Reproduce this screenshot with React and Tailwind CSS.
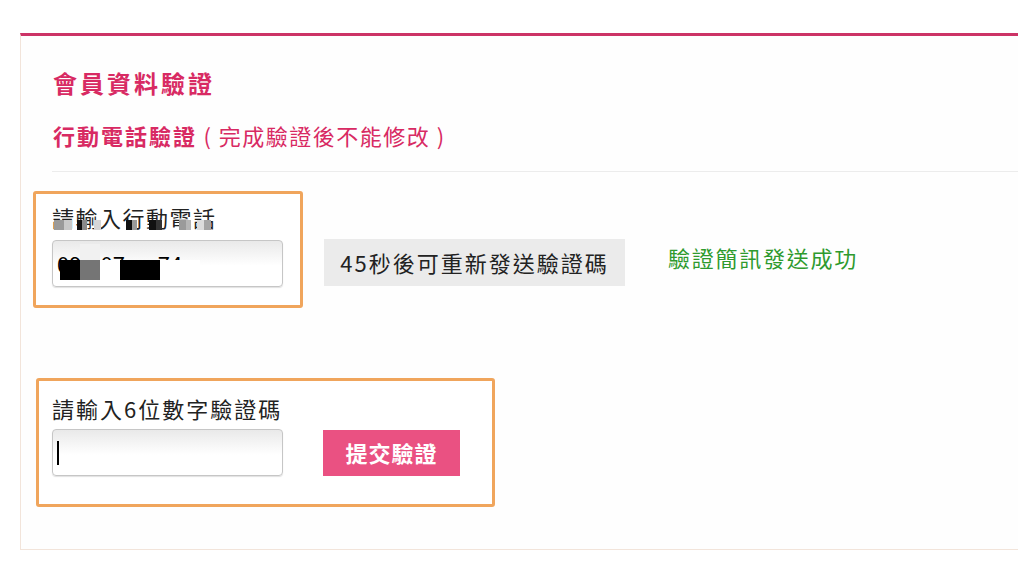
import React from "react";

const FONT = { fontFamily: '"Noto Sans CJK TC", "Noto Sans", sans-serif' };

// mosaic strip under the phone label: [gap-before, width, colour]
const labelBlocks = [
  [2, 10, "#9a9a9a"], [0, 8, "#c9c9c9"], [5, 5, "#111"], [0, 5, "#8a8a8a"],
  [7, 7, "#d6d6d6"], [25, 6, "#111"], [0, 5, "#9a9a9a"], [12, 7, "#111"],
  [0, 6, "#333"], [17, 7, "#9a9a9a"], [0, 5, "#b5b5b5"], [6, 7, "#dcdcdc"],
  [0, 7, "#a5a5a5"],
];

// mosaic over the phone number
const phoneBlocks = [
  [20, "#000"], [20, "#757575"], [20, "#fff"], [40, "#000"], [40, "#fff"],
];

function Input({ children }) {
  return (
    <div className="relative w-[231px] h-[47px] rounded-[4px] border border-[#c6c6c6] bg-[linear-gradient(to_bottom,#e9e9e9,#ffffff_55%)] shadow-[0_1px_1px_rgba(0,0,0,0.12)] overflow-hidden flex items-center pl-[4px]">
      {children}
    </div>
  );
}

export default function App() {
  return (
    <div className="w-[1018px] h-[568px] bg-white overflow-hidden pt-[33px] pl-[20px]" style={FONT}>
      <div className="h-[517px] border-t-[3px] border-t-[#cc3366] border-l border-b border-l-[#f2e4da] border-b-[#f2e4da] pt-[30px] pl-[12px] bg-[#fefefe]">
        <div className="ml-[20px] text-[24px] leading-[33px] font-bold text-[#d82a63] tracking-[3px]">
          會員資料驗證
        </div>
        <div className="ml-[20px] mt-[20px] text-[22px] leading-[33px] text-[#d82a63] tracking-[2px]">
          <span className="font-bold">行動電話驗證</span>
          <span className="tracking-[1.5px]"> ( 完成驗證後不能修改 )</span>
        </div>
        <div className="ml-[19px] mt-[19px] h-px bg-[#ececec]" />

        {/* Row 1 */}
        <div className="mt-[19px] flex items-end">
          <div className="w-[270px] h-[117px] border-[3px] border-[#f0a55c] rounded-[3px] pt-[7px] pl-[16px] bg-white">
            <div className="relative text-[22px] leading-[33px] text-[#222] tracking-[1.5px]">
              請輸入行動電話
              <div className="absolute left-0 top-[19px] h-[10px] flex">
                {labelBlocks.map(([m, w, c], i) => (
                  <span key={i} className="h-full" style={{ marginLeft: m, width: w, background: c }} />
                ))}
              </div>
            </div>
            <div className="mt-[6px]">
              <Input>
                <span className="text-[22px] leading-[33px] text-black">09</span>
                <span className="ml-[19px] text-[22px] leading-[33px] text-black">07</span>
                <span className="ml-[33px] text-[22px] leading-[33px] text-black">74</span>
                <div className="absolute left-[27px] top-[3px] w-[20px] h-[16px] bg-[#f1f1f1]" />
                <div className="absolute left-[7px] top-[19px] h-[20px] flex">
                  {phoneBlocks.map(([w, c], i) => (
                    <span key={i} className="h-full" style={{ width: w, background: c }} />
                  ))}
                </div>
              </Input>
            </div>
          </div>
          <div className="ml-[21px] mb-[22px] w-[301px] h-[47px] bg-[#ebebeb] flex items-center justify-center text-[22px] text-[#222] tracking-[2px]">
            45秒後可重新發送驗證碼
          </div>
          <div className="ml-[43px] mb-[34px] text-[22px] leading-[33px] text-[#2e9a2e] tracking-[1.75px]">
            驗證簡訊發送成功
          </div>
        </div>

        {/* Box 2 */}
        <div className="mt-[70px] ml-[3px] w-[459px] h-[129px] border-[3px] border-[#f0a55c] rounded-[3px] pt-[11px] pl-[13px] bg-white">
          <div className="text-[22px] leading-[33px] text-[#222] tracking-[2px]">
            請輸入6位數字驗證碼
          </div>
          <div className="mt-[4px] flex items-center">
            <Input>
              <span className="w-[2px] h-[24px] bg-black" />
            </Input>
            <button className="ml-[40px] w-[137px] h-[46px] bg-[#ea5182] text-white text-[22px] font-bold tracking-[1px] flex items-center justify-center">
              提交驗證
            </button>
          </div>
        </div>
      </div>
    </div>
  );
}
